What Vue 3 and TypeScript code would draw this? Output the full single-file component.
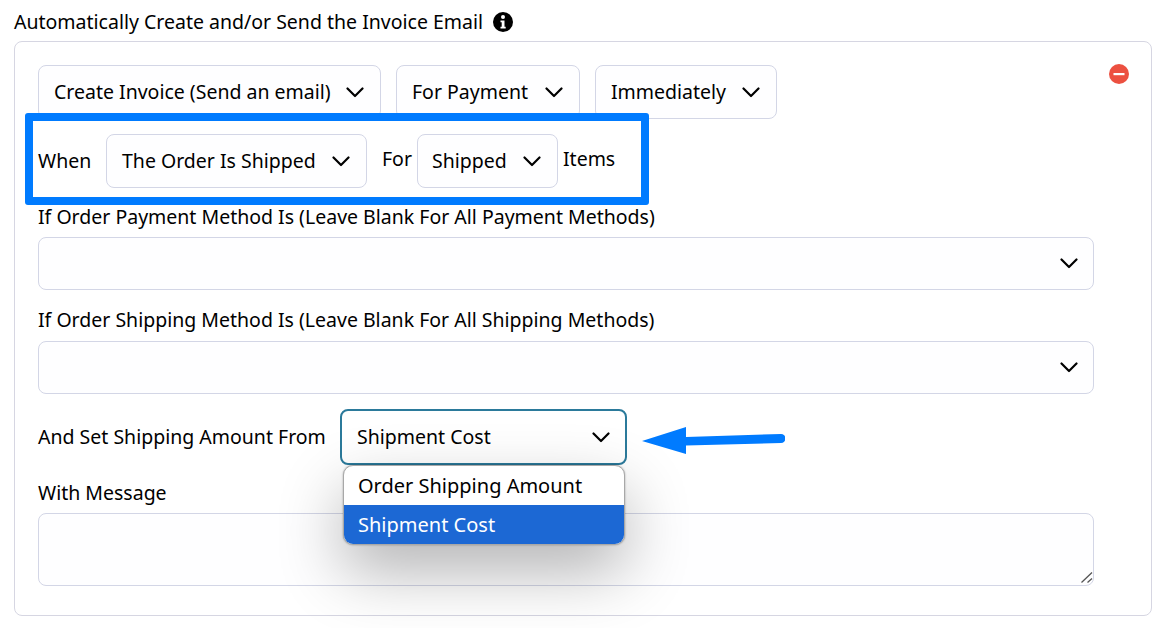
<template>
  <div class="page">
    <div class="title">
      <span>Automatically Create and/or Send the Invoice Email</span>
      <svg class="info" viewBox="0 0 20 20" width="20" height="20">
        <circle cx="10" cy="10" r="10" fill="#000" />
        <circle cx="10" cy="5" r="2" fill="#fff" />
        <path d="M7.500 8.500h4v6.200h1.200v1.800H7.500v-1.800h1.200v-4.400H7.500z" fill="#fff" />
      </svg>
    </div>
    <div class="panel">
      <svg class="remove" viewBox="0 0 20 20" width="20" height="20">
        <circle cx="10" cy="10" r="10" fill="#ec5040" />
        <rect x="4.500" y="9" width="11" height="2.200" fill="#fff" />
      </svg>

      <div class="row first">
        <div v-for="item in topSelects" :key="item.text" class="select" :class="item.size">
          <span>{{ item.text }}</span>
          <svg class="chevron" viewBox="0 0 18 11" width="18" height="11"><path d="M1.500 1.500 9 9l7.500-7.500" /></svg>
        </div>
      </div>

      <div class="row second">
        <span class="when">When</span>
        <div class="select size-shipped-when">
          <span>The Order Is Shipped</span>
          <svg class="chevron" viewBox="0 0 18 11" width="18" height="11"><path d="M1.500 1.500 9 9l7.500-7.500" /></svg>
        </div>
        <span class="for">For</span>
        <div class="select size-shipped">
          <span>Shipped</span>
          <svg class="chevron" viewBox="0 0 18 11" width="18" height="11"><path d="M1.500 1.500 9 9l7.500-7.500" /></svg>
        </div>
        <span class="items">Items</span>
        <div class="highlight"></div>
      </div>

      <div v-for="label in methodLabels" :key="label" class="field">
        <div class="label">{{ label }}</div>
        <div class="select wide">
          <span></span>
          <svg class="chevron" viewBox="0 0 18 11" width="18" height="11"><path d="M1.500 1.500 9 9l7.500-7.500" /></svg>
        </div>
      </div>

      <div class="row amount">
        <span class="amount-label">And Set Shipping Amount From</span>
        <div class="select open">
          <span>Shipment Cost</span>
          <svg class="chevron" viewBox="0 0 18 11" width="18" height="11"><path d="M1.500 1.500 9 9l7.500-7.500" /></svg>
          <ul class="menu">
            <li>Order Shipping Amount</li>
            <li class="selected">Shipment Cost</li>
          </ul>
        </div>
        <svg class="arrow" viewBox="0 0 143 27" width="143" height="27">
          <path d="M0 14 44 0v10l95-3a4.500 4.500 0 0 1 0 9l-95 2.500V27z" fill="#007bff" />
        </svg>
      </div>

      <div class="label message">With Message</div>
      <div class="text-wrap">
        <textarea class="text"></textarea>
        <svg class="grip" viewBox="0 0 12 11" width="12" height="11">
          <path d="M.5 10.500 11 .5M6.500 10.500 11 6.500" />
        </svg>
      </div>
    </div>
  </div>
</template>

<script setup lang="ts">
interface TopSelect {
  text: string
  size: string
}

const topSelects: TopSelect[] = [
  { text: 'Create Invoice (Send an email)', size: 'size-create' },
  { text: 'For Payment', size: 'size-payment' },
  { text: 'Immediately', size: 'size-when' }
]
const methodLabels: string[] = [
  'If Order Payment Method Is (Leave Blank For All Payment Methods)',
  'If Order Shipping Method Is (Leave Blank For All Shipping Methods)'
]
</script>

<style>
html,
body {
  background: #fff;
  overflow: hidden;
}
</style>

<style scoped>
.page {
  width: 1165px;
  height: 628px;
  box-sizing: border-box;
  padding: 8px 13px 0 14px;
  font-family: "Noto Sans", sans-serif;
  font-size: 19.5px;
  color: #000;
  overflow: hidden;
}

.title {
  display: flex;
  align-items: center;
  gap: 10px;
  height: 27px;
  margin-bottom: 6px;
}

.panel {
  position: relative;
  height: 575px;
  box-sizing: border-box;
  padding: 23px 57px 0 23px;
  border: 1px solid #d6d6e2;
  border-radius: 8px;
}

.remove {
  position: absolute;
  top: 22px;
  right: 22px;
}

.row {
  display: flex;
  align-items: center;
}

.first {
  gap: 15px;
}

.second {
  position: relative;
  margin-top: 15px;
}

.select {
  position: relative;
  display: flex;
  flex: none;
  align-items: center;
  justify-content: space-between;
  box-sizing: border-box;
  height: 54px;
  padding: 0 16px 2px 15px;
  background: #fefeff;
  border: 1px solid #d3d6e6;
  border-radius: 8px;
}

.size-create {
  width: 343px;
}

.size-payment {
  width: 184px;
}

.size-when {
  width: 182px;
}

.size-shipped-when {
  width: 261px;
}

.size-shipped {
  width: 141px;
  padding-left: 14px;
}

.chevron {
  flex: none;
  margin-top: 2px;
}

.chevron path {
  fill: none;
  stroke: #000;
  stroke-width: 2.2;
  stroke-linecap: round;
  stroke-linejoin: round;
}

.when {
  width: 68px;
  margin-bottom: 2px;
}

.for {
  margin: 0 5px 6px 15px;
}

.items {
  margin: 0 0 6px 5px;
}

.highlight {
  position: absolute;
  top: -21px;
  left: -13px;
  width: 624px;
  height: 92px;
  box-sizing: border-box;
  border: 8px solid #007bff;
  border-radius: 3px;
  pointer-events: none;
}

.field {
  margin-top: 15px;
}

.field + .field {
  margin-top: 16px;
}

.field + .field .label {
  height: 35px;
}

.label {
  height: 34px;
  line-height: 27px;
}

.wide {
  width: 100%;
  height: 53px;
  padding-right: 15px;
}

.amount {
  margin-top: 15px;
  gap: 15px;
}

.amount-label {
  flex: none;
  width: 287px;
  margin-bottom: 2px;
  white-space: nowrap;
}

.open {
  width: 287px;
  height: 56px;
  padding-right: 15px;
  background: #fff;
  border: 2px solid #2b7a9b;
}

.menu {
  position: absolute;
  top: 54px;
  left: 1px;
  width: 282px;
  box-sizing: border-box;
  margin: 0;
  padding: 0;
  list-style: none;
  overflow: hidden;
  font-size: 20px;
  background: #fff;
  border: 1px solid #a8a8a8;
  border-radius: 10px;
  box-shadow: 0 0 2px rgba(0, 0, 0, 0.35), 0 26px 64px rgba(0, 0, 0, 0.3);
  z-index: 2;
}

.menu li {
  height: 39px;
  line-height: 40px;
  padding: 0 14px;
}

.menu .selected {
  background: #1c68d4;
  color: #fff;
}

.arrow {
  margin-top: 7px;
}

.message {
  margin-top: 15px;
  height: 33px;
  line-height: 25px;
}

.text-wrap {
  position: relative;
}

.text {
  display: block;
  width: 100%;
  height: 73px;
  box-sizing: border-box;
  background: #fefeff;
  border: 1px solid #d3d6e6;
  border-radius: 8px;
  outline: none;
  resize: none;
}

.grip {
  position: absolute;
  right: 1px;
  bottom: 3px;
}

.grip path {
  fill: none;
  stroke: #555;
  stroke-width: 1.3;
}
</style>
